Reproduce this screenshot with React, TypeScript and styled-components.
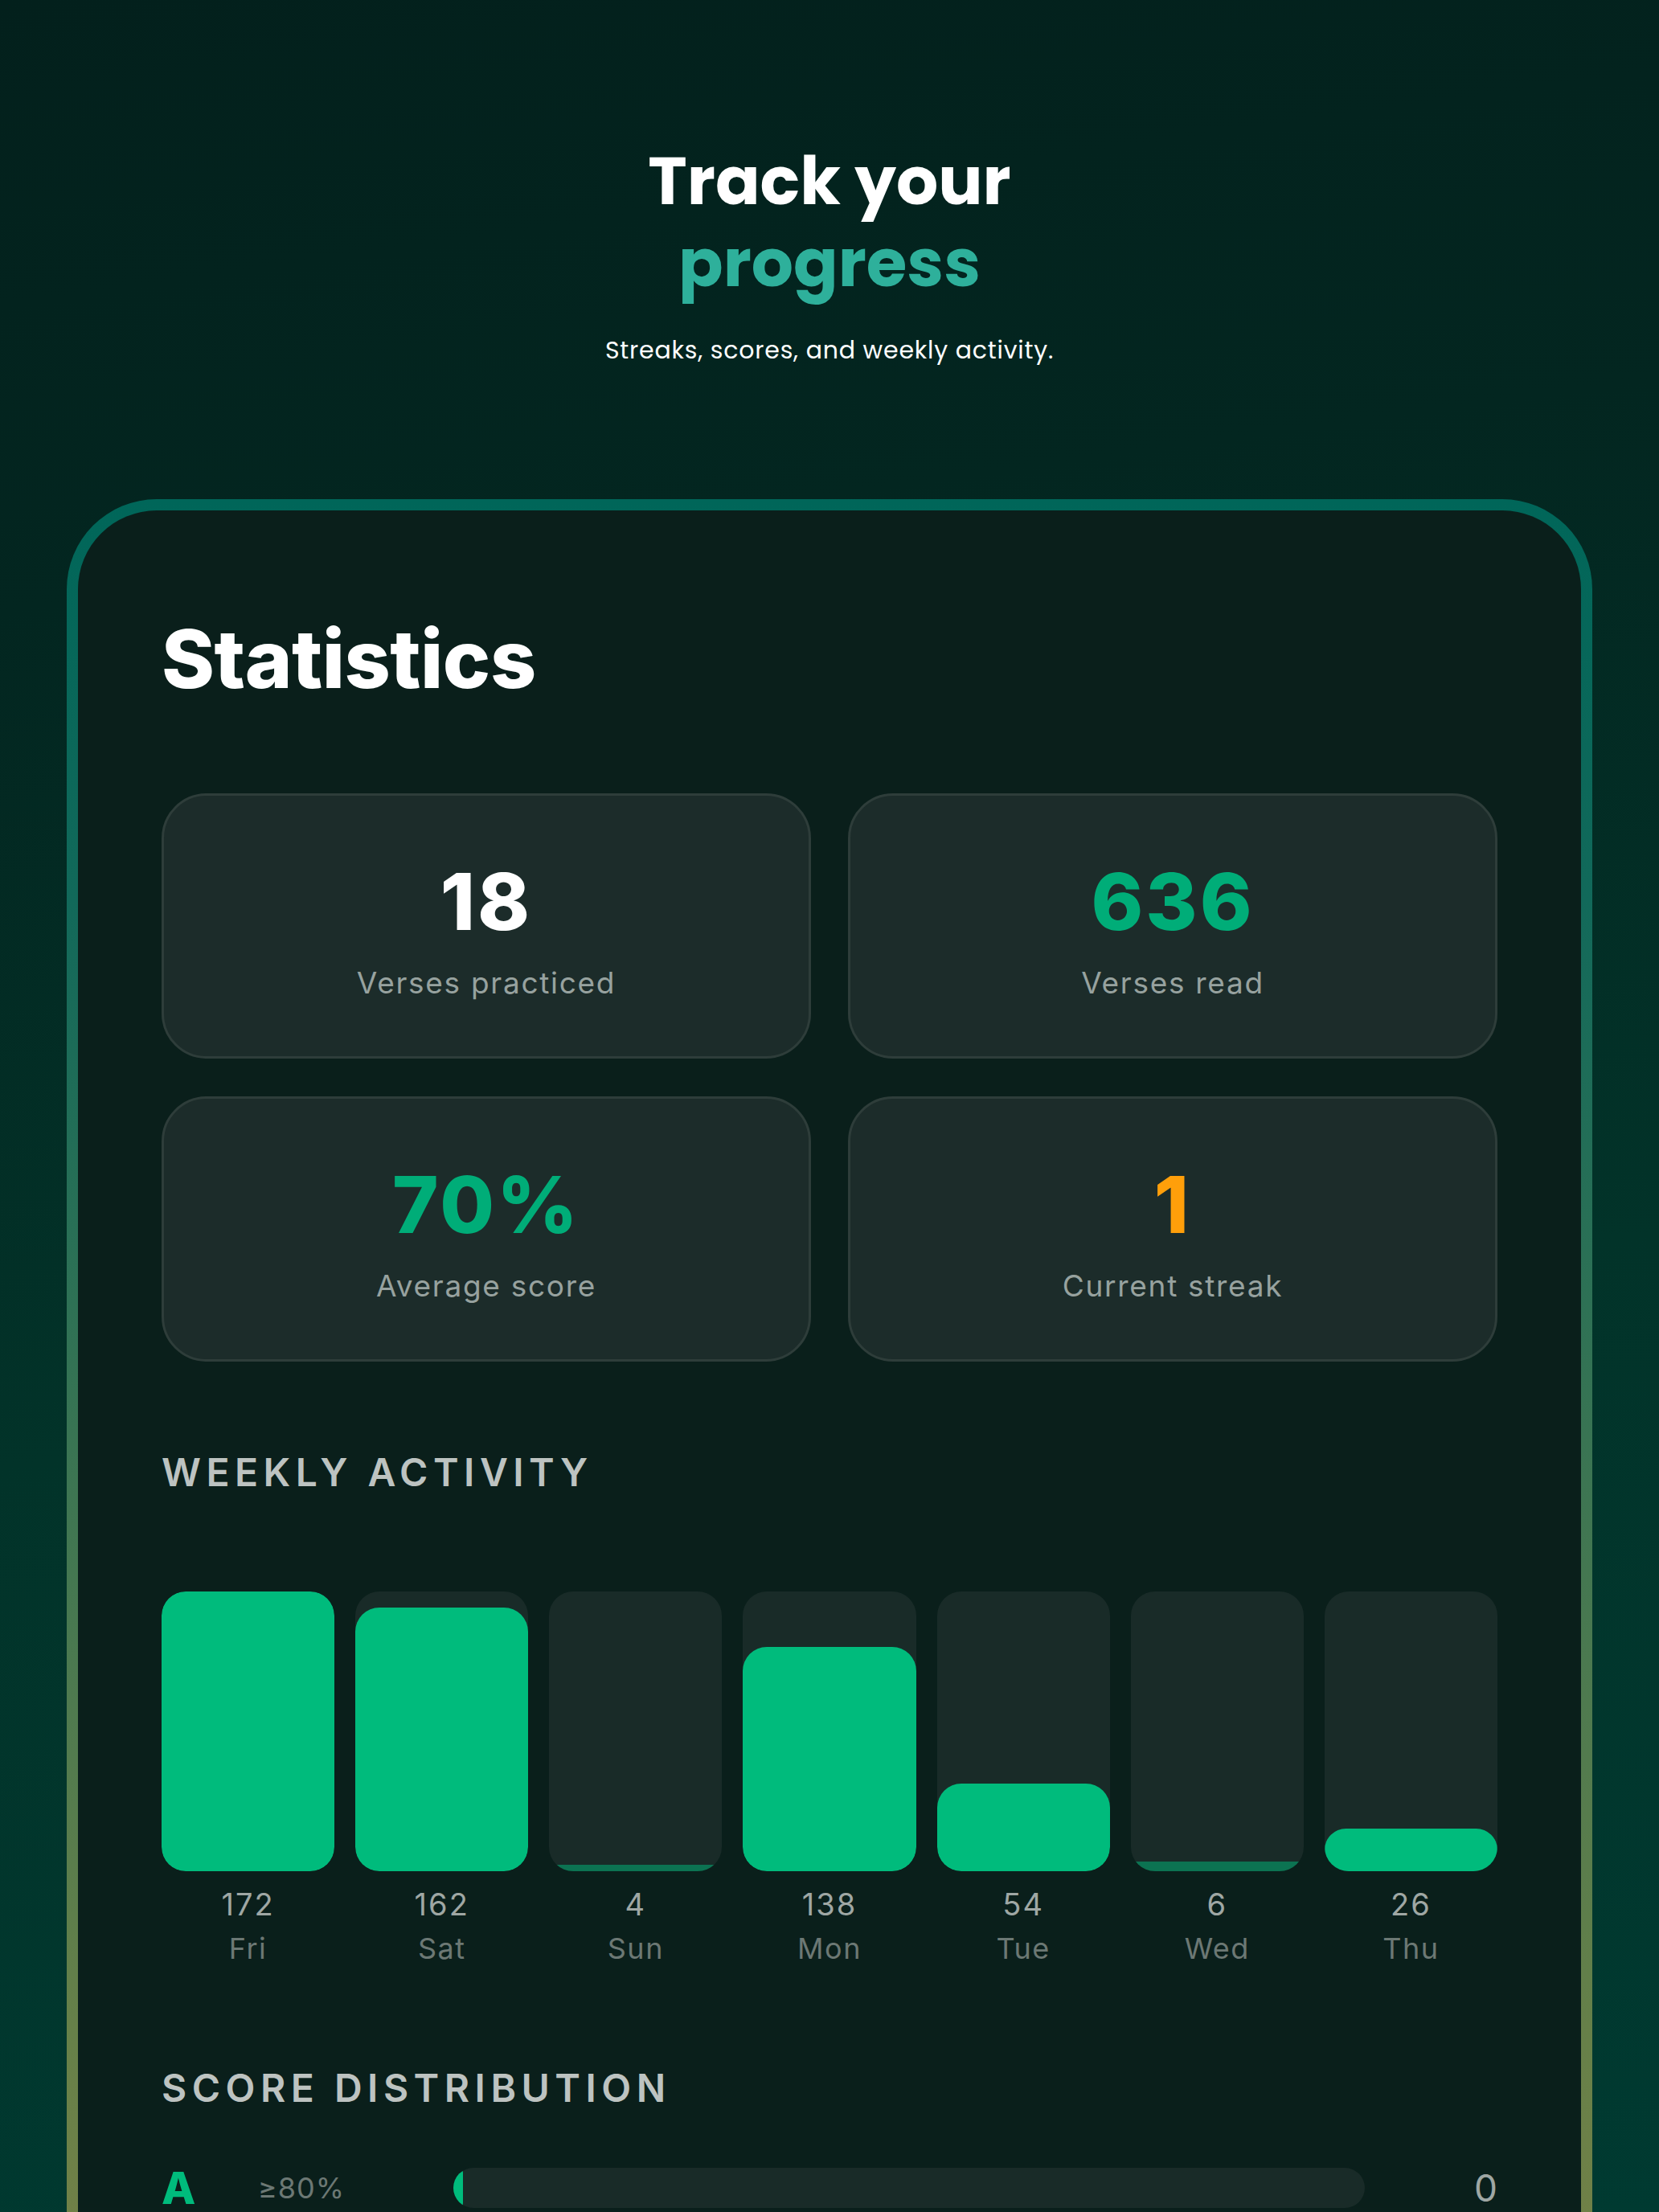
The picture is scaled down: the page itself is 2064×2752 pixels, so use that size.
import styled, { createGlobalStyle } from "styled-components";

type Stat = { value: string; label: string; tone: "white" | "green" | "orange" };
type Day = { day: string; count: number };
type Grade = { grade: string; range: string; count: number };

const stats: Stat[] = [
  { value: "18", label: "Verses practiced", tone: "white" },
  { value: "636", label: "Verses read", tone: "green" },
  { value: "70%", label: "Average score", tone: "green" },
  { value: "1", label: "Current streak", tone: "orange" },
];

const week: Day[] = [
  { day: "Fri", count: 172 },
  { day: "Sat", count: 162 },
  { day: "Sun", count: 4 },
  { day: "Mon", count: 138 },
  { day: "Tue", count: 54 },
  { day: "Wed", count: 6 },
  { day: "Thu", count: 26 },
];

const grades: Grade[] = [
  { grade: "A", range: "≥80%", count: 0 },
  { grade: "B", range: "60–79%", count: 12 },
  { grade: "C", range: "40–59%", count: 5 },
  { grade: "D", range: "<40%", count: 1 },
];

const toneColor = {
  white: "#ffffff",
  green: "#00ad78",
  orange: "#ff9f0a",
};

const GlobalStyle = createGlobalStyle`
  html, body {
    margin: 0;
    padding: 0;
    background: #022520;
  }
  * {
    box-sizing: border-box;
  }
`;

const Page = styled.div`
  height: 2752px;
  overflow: hidden;
  padding-top: 175px;
  background: linear-gradient(172deg, #03201c 0%, #032620 25%, #023329 60%, #003a31 100%);
  font-family: Inter, "Noto Sans", sans-serif;
`;

const Hero = styled.header`
  display: flex;
  flex-direction: column;
  align-items: center;
  text-align: center;
`;

const Title = styled.h1`
  margin: 0;
  font-family: Poppins, "Open Sans", sans-serif;
  font-size: 82px;
  line-height: 102px;
  font-weight: 700;
  color: #ffffff;

  span {
    display: block;
    color: #2eb09b;
  }
`;

const Subtitle = styled.p`
  margin: 37px 0 0;
  font-family: Poppins, "Open Sans", sans-serif;
  font-size: 30px;
  line-height: 40px;
  letter-spacing: 0.8px;
  color: #ffffff;
`;

const Card = styled.section`
  margin: 165px 83px 0;
  padding: 14px;
  border-radius: 112px;
  background: linear-gradient(
    180deg,
    #006659 0px,
    #12695a 500px,
    #2e7155 1000px,
    #4f7a4f 1500px,
    #668049 1900px,
    #778146 2300px
  );
`;

const CardInner = styled.div`
  border-radius: 98px;
  background: #0a1f1b;
  padding: 125px 104px 140px;
`;

const Heading = styled.h2`
  margin: 0;
  font-size: 100px;
  line-height: 120px;
  font-weight: 800;
  letter-spacing: -0.5px;
  color: #ffffff;
`;

const StatGrid = styled.div`
  display: grid;
  grid-template-columns: 1fr 1fr;
  column-gap: 46px;
  row-gap: 47px;
  margin-top: 107px;
`;

const StatCard = styled.div`
  height: 330px;
  display: flex;
  flex-direction: column;
  align-items: center;
  justify-content: center;
  padding-top: 14px;
  border: 3px solid #2e3d3a;
  border-radius: 56px;
  background: #1c2c2a;
`;

const StatValue = styled.div<{ $tone: Stat["tone"] }>`
  font-size: 98px;
  line-height: 98px;
  font-weight: 800;
  letter-spacing: 3px;
  color: ${(p) => toneColor[p.$tone]};
`;

const StatLabel = styled.div`
  margin-top: 30px;
  font-size: 37px;
  line-height: 44px;
  letter-spacing: 1.7px;
  color: #97a29f;
`;

const SectionTitle = styled.h3<{ $gap: number }>`
  margin: ${(p) => p.$gap}px 0 0;
  font-size: 48px;
  line-height: 58px;
  font-weight: 600;
  letter-spacing: 6.5px;
  color: #bdc3c1;
`;

const Chart = styled.div`
  display: grid;
  grid-template-columns: repeat(7, 1fr);
  column-gap: 26px;
  margin-top: 119px;
`;

const BarColumn = styled.div`
  display: flex;
  flex-direction: column;
  align-items: center;
`;

const BarTrack = styled.div`
  width: 100%;
  height: 348px;
  display: flex;
  align-items: flex-end;
  border-radius: 30px;
  overflow: hidden;
  background: #192b28;
`;

const BarFill = styled.div<{ $dim: boolean }>`
  width: 100%;
  border-radius: 30px;
  background: #00bb7c;
  opacity: ${(p) => (p.$dim ? 0.5 : 1)};
`;

const BarValue = styled.div`
  margin-top: 18px;
  font-size: 38px;
  line-height: 46px;
  letter-spacing: 2px;
  color: #9fa7a4;
`;

const BarDay = styled.div`
  margin-top: 10px;
  font-size: 36px;
  line-height: 44px;
  letter-spacing: 1.5px;
  color: #6c7874;
`;

const ScoreList = styled.div`
  display: flex;
  flex-direction: column;
  gap: 48px;
  margin-top: 70px;
`;

const ScoreRow = styled.div`
  display: grid;
  grid-template-columns: 120px 243px 1fr 165px;
  align-items: center;
  height: 50px;
`;

const GradeMark = styled.div`
  font-size: 55px;
  line-height: 50px;
  font-weight: 800;
  color: #00bb7c;
`;

const GradeRange = styled.div`
  font-size: 36px;
  line-height: 50px;
  letter-spacing: 1px;
  color: #6c7874;
`;

const ScoreTrack = styled.div`
  height: 50px;
  border-radius: 25px;
  overflow: hidden;
  background: #192b28;
`;

const ScoreFill = styled.div`
  height: 100%;
  min-width: 12px;
  border-radius: 25px;
  background: #00bb7c;
`;

const ScoreCount = styled.div`
  text-align: right;
  font-size: 46px;
  line-height: 50px;
  color: #9fa7a4;
`;

export default function App() {
  const maxDay = Math.max(...week.map((d) => d.count));
  const totalGrades = grades.reduce((sum, g) => sum + g.count, 0) || 1;

  return (
    <Page>
      <GlobalStyle />
      <Hero>
        <Title>
          Track your
          <span>progress</span>
        </Title>
        <Subtitle>Streaks, scores, and weekly activity.</Subtitle>
      </Hero>

      <Card>
        <CardInner>
          <Heading>Statistics</Heading>

          <StatGrid>
            {stats.map((s) => (
              <StatCard key={s.label}>
                <StatValue $tone={s.tone}>{s.value}</StatValue>
                <StatLabel>{s.label}</StatLabel>
              </StatCard>
            ))}
          </StatGrid>

          <SectionTitle $gap={109}>WEEKLY ACTIVITY</SectionTitle>
          <Chart>
            {week.map((d) => (
              <BarColumn key={d.day}>
                <BarTrack>
                  <BarFill
                    $dim={d.count / maxDay < 0.05}
                    style={{ height: `${(d.count / maxDay) * 100}%` }}
                  />
                </BarTrack>
                <BarValue>{d.count}</BarValue>
                <BarDay>{d.day}</BarDay>
              </BarColumn>
            ))}
          </Chart>

          <SectionTitle $gap={123}>SCORE DISTRIBUTION</SectionTitle>
          <ScoreList>
            {grades.map((g) => (
              <ScoreRow key={g.grade}>
                <GradeMark>{g.grade}</GradeMark>
                <GradeRange>{g.range}</GradeRange>
                <ScoreTrack>
                  <ScoreFill style={{ width: `${(g.count / totalGrades) * 100}%` }} />
                </ScoreTrack>
                <ScoreCount>{g.count}</ScoreCount>
              </ScoreRow>
            ))}
          </ScoreList>
        </CardInner>
      </Card>
    </Page>
  );
}
